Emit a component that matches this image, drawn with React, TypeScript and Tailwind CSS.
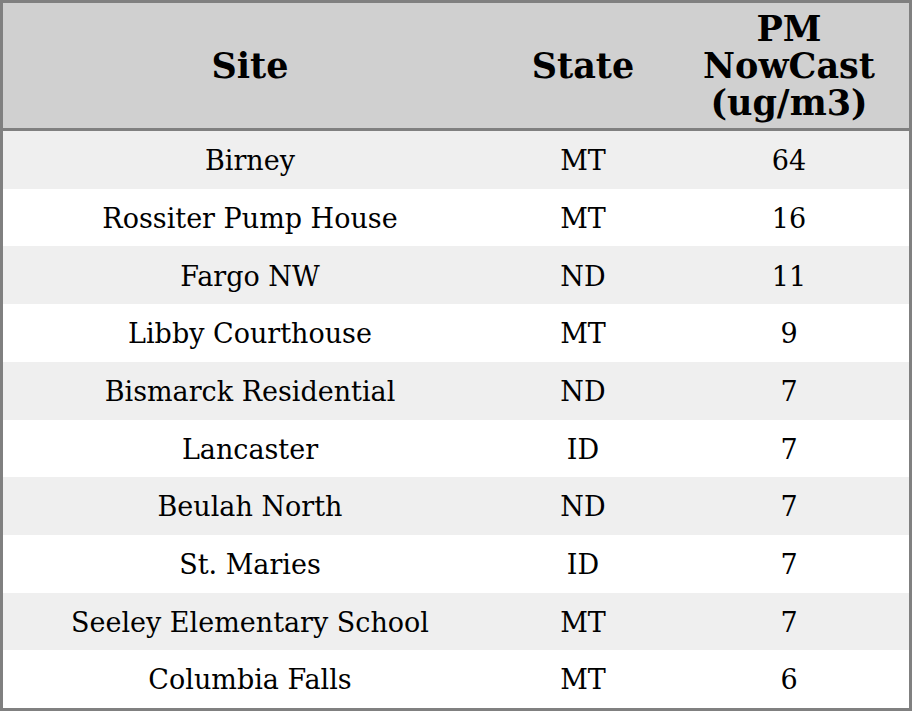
const rows = [
  ["Birney", "MT", "64"],
  ["Rossiter Pump House", "MT", "16"],
  ["Fargo NW", "ND", "11"],
  ["Libby Courthouse", "MT", "9"],
  ["Bismarck Residential", "ND", "7"],
  ["Lancaster", "ID", "7"],
  ["Beulah North", "ND", "7"],
  ["St. Maries", "ID", "7"],
  ["Seeley Elementary School", "MT", "7"],
  ["Columbia Falls", "MT", "6"],
]

export default function App() {
  return (
    <div className="w-[912px] h-[711px] bg-white font-['DejaVu_Serif',serif] text-black">
      <div className="border-[3px] border-[#808080] h-full flex flex-col">
        <div className="flex h-[128px] bg-[#d0d0d0] border-b-[3px] border-[#808080] font-bold text-[35px] leading-[37px] text-center">
          <div className="w-[494px] flex items-center justify-center">Site</div>
          <div className="w-[172px] flex items-center justify-center">State</div>
          <div className="flex-1 flex items-center justify-center">
            PM
            <br />
            NowCast
            <br />
            (ug/m3)
          </div>
        </div>
        {rows.map((r, i) => (
          <div
            key={i}
            className={`flex flex-1 items-center pt-[3px] text-[27px] text-center ${i % 2 === 0 ? "bg-[#efefef]" : "bg-white"}`}
          >
            <div className="w-[494px]">{r[0]}</div>
            <div className="w-[172px]">{r[1]}</div>
            <div className="flex-1">{r[2]}</div>
          </div>
        ))}
      </div>
    </div>
  )
}
